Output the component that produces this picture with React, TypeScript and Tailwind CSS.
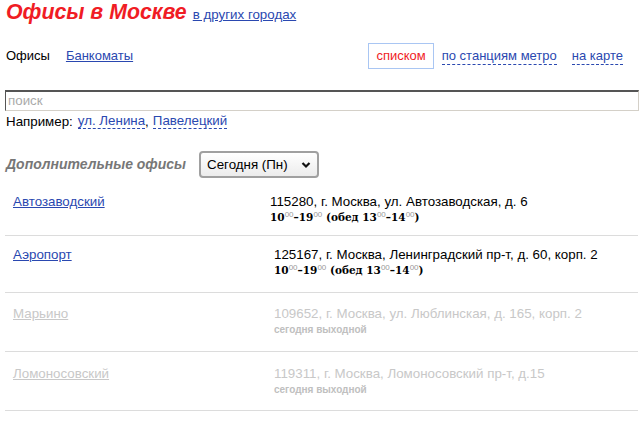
import React from "react";

const LINK = "text-[#2a48b0]";

function Sup() {
  return <span className="text-[8px] font-normal text-[#999] relative -top-[4px] leading-none font-['Liberation_Sans',sans-serif]">00</span>;
}

function Hours() {
  return (
    <div className="font-['DejaVu_Serif',serif] font-bold text-[10.5px] leading-[14px] text-black whitespace-nowrap">
      10<Sup />–19<Sup /> (обед 13<Sup />–14<Sup />)
    </div>
  );
}

type Row = {
  name: string;
  addr: string;
  open: boolean;
  pt: string;
  pb: string;
  shift: string;
};

const rows: Row[] = [
  { name: "Автозаводский", addr: "115280, г. Москва, ул. Автозаводская, д. 6", open: true, pt: "pt-[15px]", pb: "pb-[11px]", shift: "pl-0" },
  { name: "Аэропорт", addr: "125167, г. Москва, Ленинградский пр-т, д. 60, корп. 2", open: true, pt: "pt-[11px]", pb: "pb-[15px]", shift: "pl-[4px]" },
  { name: "Марьино", addr: "109652, г. Москва, ул. Люблинская, д. 165, корп. 2", open: false, pt: "pt-[13px]", pb: "pb-[14px]", shift: "pl-[4px]" },
  { name: "Ломоносовский", addr: "119311, г. Москва, Ломоносовский пр-т, д.15", open: false, pt: "pt-[14px]", pb: "pb-[13px]", shift: "pl-[4px]" },
];

export default function App() {
  return (
    <div className="w-[643px] h-[431px] bg-white font-['Liberation_Sans',Arial,sans-serif] text-[13.33px] text-black overflow-hidden">
      <div className="pl-[6px] leading-[25px] flex items-baseline">
        <span className="text-[21.3px] font-bold italic text-[#f01c24]">Офисы в Москве</span>
        <a className={`ml-[6px] underline ${LINK}`}>в других городах</a>
      </div>

      <div className="mt-[16px] flex items-center h-[26px] pl-[6px] pr-[20px] text-[13px]">
        <span>Офисы</span>
        <a className={`ml-[16px] underline ${LINK}`}>Банкоматы</a>
        <div className="ml-auto flex items-center">
          <span className="border border-[#a9c6f3] h-[26px] leading-[24px] px-[7px] text-[#f01c24]">списком</span>
          <span className={`ml-[8px] leading-[16px] border-b border-dashed border-[#2a48b0] ${LINK}`}>по станциям метро</span>
          <span className={`ml-[15px] leading-[16px] border-b border-dashed border-[#2a48b0] ${LINK}`}>на карте</span>
        </div>
      </div>

      <div className="mt-[21px] ml-[5px] mr-[4px] h-[21px] border-t-2 border-l border-t-[#555] border-l-[#555] border-r border-b border-r-[#d4d0c8] border-b-[#d4d0c8] flex items-center pl-[2px] text-[#aaa] leading-[16px]">
        поиск
      </div>

      <div className="mt-[3px] pl-[6px] leading-[16px] flex">
        <span>Например:</span>
        <span className={`ml-[5px] border-b border-dashed border-[#2a48b0] leading-[14px] h-[15px] ${LINK}`}>ул. Ленина</span>
        <span>,</span>
        <span className={`ml-[4px] border-b border-dashed border-[#2a48b0] leading-[14px] h-[15px] ${LINK}`}>Павелецкий</span>
      </div>

      <div className="mt-[21px] pl-[6px] flex items-center h-[27px]">
        <span className="font-bold italic text-[14px] text-[#777]">Дополнительные офисы</span>
        <div className="ml-[13px] w-[120px] h-[27px] rounded-[4px] border-2 border-[#a0a0a0] bg-gradient-to-b from-white to-[#ececec] flex items-center pl-[6px] pr-[6px]">
          <span>Сегодня (Пн)</span>
          <svg className="ml-auto" width="10" height="8" viewBox="0 0 10 8">
            <path d="M1.5 2 L5 5.5 L8.5 2" fill="none" stroke="#111" strokeWidth="2.2" />
          </svg>
        </div>
      </div>

      <div className="mt-[1px] mx-[5px]">
        {rows.map((r) => (
          <div key={r.name} className={`flex border-b border-[#dcdcdc] ${r.pt} ${r.pb}`}>
            <div className="w-[265px] pl-[8px] leading-[16px]">
              <a className={`underline ${r.open ? LINK : "text-[#c8c8c8]"}`}>{r.name}</a>
            </div>
            <div className={r.shift}>
              <div className={`leading-[16px] ${r.open ? "text-black" : "text-[#c8c8c8]"}`}>{r.addr}</div>
              {r.open ? (
                <Hours />
              ) : (
                <div className="font-bold text-[10px] leading-[15px] text-[#c0c0c0]">сегодня выходной</div>
              )}
            </div>
          </div>
        ))}
      </div>
    </div>
  );
}
